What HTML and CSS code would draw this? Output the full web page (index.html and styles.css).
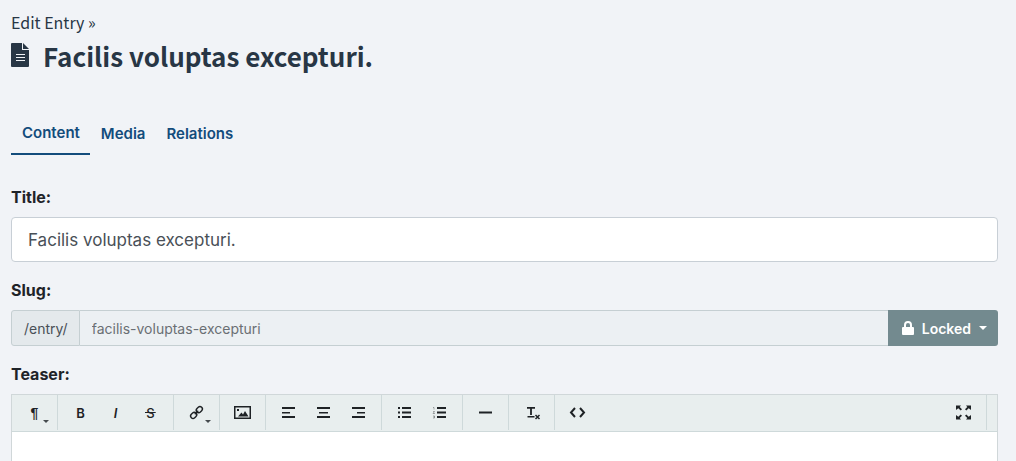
FILE: index.html
```html
<!DOCTYPE html>
<html lang="en">
<head>
<meta charset="utf-8">
<meta name="viewport" content="width=device-width, initial-scale=1">
<title>Edit Entry</title>
<link rel="stylesheet" href="styles.css">
</head>
<body>
<main class="page">
  <header class="page-header">
    <div class="crumb">Edit Entry »</div>
    <h1 class="heading">
      <svg class="heading-icon" viewBox="0 0 18 24" aria-hidden="true"><path fill="currentColor" fill-rule="evenodd" d="M1 0h10v7h7v16a1 1 0 0 1-1 1H1a1 1 0 0 1-1-1V1a1 1 0 0 1 1-1zM5 11v1h9v-1zM5 14v1h9v-1zM5 17v1h9v-1z"/><path fill="currentColor" d="M12 0l6 6h-6z"/></svg>
      <span>Facilis voluptas excepturi.</span>
    </h1>
  </header>

  <nav class="tabs">
    <a class="tab tab-active" href="#content">Content</a>
    <a class="tab" href="#media">Media</a>
    <a class="tab" href="#relations">Relations</a>
  </nav>

  <form class="fields">
    <div class="field field-title">
      <label class="label" for="title">Title:</label>
      <input class="input-large" id="title" type="text" value="Facilis voluptas excepturi.">
    </div>

    <div class="field field-slug">
      <label class="label" for="slug">Slug:</label>
      <div class="slug-group">
        <span class="slug-prefix">/entry/</span>
        <input class="slug-input" id="slug" type="text" value="facilis-voluptas-excepturi" readonly>
        <button class="lock-button" type="button">
          <svg class="lock-icon" viewBox="0 0 12 14" aria-hidden="true"><path fill="none" stroke="currentColor" stroke-width="2" d="M3 7V4a3 3 0 0 1 6 0v3"/><rect y="6" width="12" height="8" rx="1" fill="currentColor"/></svg>
          <span>Locked</span>
          <span class="caret"></span>
        </button>
      </div>
    </div>

    <div class="field">
      <label class="label" for="teaser">Teaser:</label>
      <div class="editor">
        <div class="toolbar" role="toolbar">
          <div class="tool-group">
            <button class="tool has-menu" type="button" title="Format"><span class="glyph glyph-format">¶</span></button>
          </div>
          <div class="tool-group">
            <button class="tool" type="button" title="Bold"><span class="glyph">B</span></button>
            <button class="tool" type="button" title="Italic"><span class="glyph glyph-italic">I</span></button>
            <button class="tool" type="button" title="Strikethrough"><span class="glyph glyph-strike">S</span></button>
          </div>
          <div class="tool-group">
            <button class="tool has-menu" type="button" title="Link"><svg class="icon" viewBox="0 0 21 20"><g transform="rotate(-45 10.500 9.500)" fill="none" stroke="currentColor" stroke-width="1.400"><rect x="3.200" y="7.100" width="6.600" height="4.800" rx="2.400"/><rect x="11.200" y="7.100" width="6.600" height="4.800" rx="2.400"/><path d="M8 9.500h5"/></g></svg></button>
          </div>
          <div class="tool-group">
            <button class="tool" type="button" title="Image"><svg class="icon" viewBox="0 0 21 20"><path fill="none" stroke="currentColor" stroke-width="1.500" d="M2.750 3.750h15.500v11.500H2.750z"/><path fill="currentColor" d="M6 13.500l3.500-4 1.500 2L13 8l3.500 5.500zM5 6h2v2H5z"/></svg></button>
          </div>
          <div class="tool-group">
            <button class="tool" type="button" title="Align left"><svg class="icon" viewBox="0 0 21 20"><path fill="currentColor" d="M4 4h13v2H4zM4 9h8v1.500H4zM4 13h13v2H4z"/></svg></button>
            <button class="tool" type="button" title="Align center"><svg class="icon" viewBox="0 0 21 20"><path fill="currentColor" d="M4 4h13v2H4zM6 9h9v1.500H6zM4 13h13v2H4z"/></svg></button>
            <button class="tool" type="button" title="Align right"><svg class="icon" viewBox="0 0 21 20"><path fill="currentColor" d="M4 4h13v2H4zM9 9h8v1.500H9zM4 13h13v2H4z"/></svg></button>
          </div>
          <div class="tool-group">
            <button class="tool" type="button" title="Bulleted list"><svg class="icon" viewBox="0 0 21 20"><path fill="currentColor" d="M4 4h2v2H4zM8 4h9v2H8zM4 8.500h2v2H4zM8 8.500h9v2H8zM4 13h2v2H4zM8 13h9v2H8z"/></svg></button>
            <button class="tool" type="button" title="Numbered list"><svg class="icon" viewBox="0 0 21 20"><path fill="currentColor" d="M8 4h9v2H8zM8 8.500h9v2H8zM8 13h9v2H8z"/><path fill="none" stroke="currentColor" stroke-width="0.600" opacity=".6" d="M4 4.500h1v2M4 8.500h1.500l-1.500 2h2M4 13h1.500v2H4M4.500 14h1"/></svg></button>
          </div>
          <div class="tool-group">
            <button class="tool" type="button" title="Horizontal rule"><svg class="icon" viewBox="0 0 21 20"><path fill="currentColor" d="M4 8.500h13v2H4z"/></svg></button>
          </div>
          <div class="tool-group">
            <button class="tool" type="button" title="Remove formatting"><svg class="icon" viewBox="0 0 21 20"><path fill="none" stroke="currentColor" stroke-width="1.800" d="M6 4.900h8M10 4.900v7"/><path fill="currentColor" d="M6.500 13h7v1.500h-7z"/><path fill="none" stroke="currentColor" stroke-width="1.500" d="M14.500 12l4 4M18.500 12l-4 4"/></svg></button>
          </div>
          <div class="tool-group tool-group-last">
            <button class="tool" type="button" title="Source"><svg class="icon" viewBox="0 0 21 20"><path fill="none" stroke="currentColor" stroke-width="2" d="M8 5L4 9.500 8 14M13 5l4 4.500-4 4.500"/></svg></button>
          </div>
          <div class="tool-group tool-group-end">
            <button class="tool" type="button" title="Fullscreen"><svg class="icon" viewBox="0 0 21 20"><path fill="currentColor" d="M3 2.500h5L6.700 4l2.300 2.300L7.700 7.600 5.300 5.300 3 7zM18 2.500V7l-2.300-1.700-2.400 2.300L12 6.300 14.300 4 13 2.500zM3 16.500V12l2.300 1.700 2.400-2.300L9 12.700 6.700 15 8 16.500zM18 16.500h-5l1.300-1.500-2.300-2.300 1.300-1.300 2.400 2.300L18 12z"/></svg></button>
          </div>
        </div>
        <textarea class="editor-area" id="teaser"></textarea>
      </div>
    </div>
  </form>
</main>
</body>
</html>
```
FILE: styles.css
```css
* {
  box-sizing: border-box;
}

body {
  margin: 0;
  background: #f1f3f7;
  color: #1f2328;
  font-family: Inter, "Liberation Sans", sans-serif;
  font-size: 15px;
  overflow: hidden;
}

button,
input,
textarea {
  font-family: inherit;
  margin: 0;
}

.page {
  padding: 11px 18px 0 11px;
}

.page-header {
  color: #283645;
  font-family: "Noto Sans CJK SC", "Noto Sans", sans-serif;
}

.crumb {
  font-size: 16px;
  line-height: 22px;
}

.heading {
  display: flex;
  align-items: center;
  gap: 14px;
  margin: 5px 0 0;
  font-size: 26px;
  font-weight: 600;
  line-height: 36px;
}

.heading-icon {
  width: 18px;
  height: 24px;
  margin-bottom: 2px;
}

.tabs {
  display: flex;
  align-items: center;
  margin-top: 39px;
}

.tab {
  padding: 8px 10px 8px 11px;
  color: #134c7c;
  font-weight: 600;
  line-height: 24px;
  text-decoration: none;
}

.tab-active {
  border-bottom: 2px solid #134c7c;
}

.fields {
  display: flex;
  flex-direction: column;
  gap: 17px;
  margin-top: 31px;
}

.label {
  display: block;
  margin-bottom: 9px;
  font-size: 16px;
  font-weight: 700;
  line-height: 22px;
}

.input-large {
  display: block;
  width: 100%;
  height: 45px;
  padding: 0 16px;
  border: 1px solid #c8cfd6;
  border-radius: 4px;
  background: #fff;
  color: #495057;
  font-size: 17px;
}

.slug-group {
  display: flex;
  height: 36px;
}

.slug-prefix {
  display: flex;
  align-items: center;
  padding: 0 11px 0 12px;
  border: 1px solid #c5cfd2;
  border-radius: 3px 0 0 3px;
  background: #e4e9ec;
  color: #495057;
  font-size: 14px;
}

.slug-input {
  flex: 1;
  min-width: 0;
  padding: 0 12px;
  border: solid #c5cfd2;
  border-width: 1px 0;
  background: #ecf0f3;
  color: #6a6f73;
  font-size: 14px;
}

.lock-button {
  display: flex;
  align-items: center;
  gap: 8px;
  padding: 0 11px 0 14px;
  border: 0;
  border-radius: 0 3px 3px 0;
  background: #738a8f;
  color: #fff;
  font-size: 14px;
  font-weight: 600;
}

.lock-icon {
  width: 12px;
  height: 14px;
}

.caret {
  border: 4px solid transparent;
  border-top-color: currentColor;
  border-bottom: 0;
}

.editor {
  border: 1px solid #d0d7d9;
}

.toolbar {
  display: flex;
  height: 37px;
  padding-bottom: 1px;
  border-bottom: 1px solid #ced9da;
  background: #e8eeee;
}

.tool-group {
  display: flex;
  padding: 0 5px;
  border-right: 1px solid #ced9da;
}

.tool-group-last {
  border-right: 0;
}

.tool-group-end {
  margin-right: 10px;
  margin-left: auto;
}

.tool {
  position: relative;
  display: flex;
  align-items: center;
  justify-content: center;
  width: 35px;
  padding: 0;
  border: 0;
  background: none;
  color: #1e2225;
}

.has-menu::after {
  content: "";
  position: absolute;
  right: 3px;
  bottom: 7px;
  border: 3px solid transparent;
  border-top-color: #454b4e;
  border-bottom: 0;
}

.icon {
  width: 21px;
  height: 20px;
}

.glyph {
  font-size: 13px;
  font-weight: 600;
  line-height: 20px;
}

.glyph-italic {
  font-style: italic;
}

.glyph-strike {
  padding: 0 1px;
  background: linear-gradient(currentColor, currentColor) center / 100% 1px no-repeat;
  font-weight: 500;
}

.glyph-format {
  font-family: "Liberation Sans", sans-serif;
  font-size: 14px;
  font-weight: 700;
}

.editor-area {
  display: block;
  width: 100%;
  height: 120px;
  padding: 16px;
  border: 0;
  background: #fff;
  resize: none;
}
```
